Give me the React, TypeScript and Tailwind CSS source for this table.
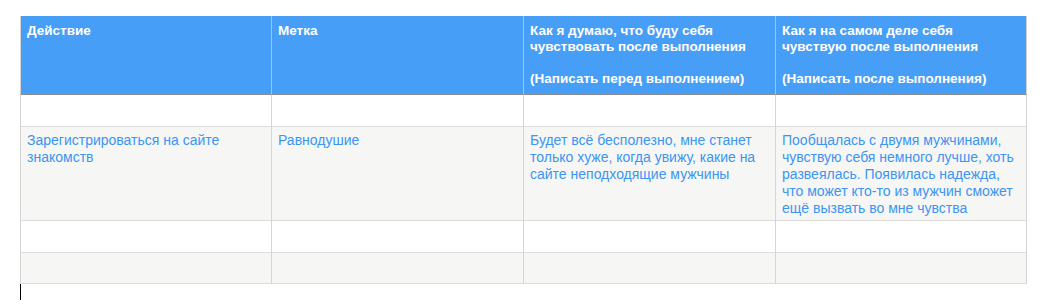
import React from "react";

const headers: string[][] = [
  ["Действие"],
  ["Метка"],
  ["Как я думаю, что буду себя", "чувствовать после выполнения", "", "(Написать перед выполнением)"],
  ["Как я на самом деле себя", "чувствую после выполнения", "", "(Написать после выполнения)"],
];

const rowData: { h: string; bg: string; cells: string[][] }[] = [
  { h: "h-[32px]", bg: "bg-white", cells: [[], [], [], []] },
  {
    h: "h-[94px]",
    bg: "bg-[#f6f6f5]",
    cells: [
      ["Зарегистрироваться на сайте", "знакомств"],
      ["Равнодушие"],
      ["Будет всё бесполезно, мне станет", "только хуже, когда увижу, какие на", "сайте неподходящие мужчины"],
      [
        "Пообщалась с двумя мужчинами,",
        "чувствую себя немного лучше, хоть",
        "развеялась. Появилась надежда,",
        "что может кто-то из мужчин сможет",
        "ещё вызвать во мне чувства",
      ],
    ],
  },
  { h: "h-[32px]", bg: "bg-white", cells: [[], [], [], []] },
  { h: "h-[31px]", bg: "bg-[#f6f6f5]", cells: [[], [], [], []] },
];

export default function App() {
  return (
    <div
      className="w-[1050px] h-[306px] bg-white pl-[20px] pt-[16px]"
      style={{ fontFamily: '"Liberation Sans", Arial, sans-serif' }}
    >
      <div className="grid grid-cols-[252px_252px_252px_251px] w-[1007px]">
        {headers.map((lines, i) => (
          <div
            key={i}
            className={`h-[79px] bg-[#479ef7] border-b border-[#8d8d8d] px-[6px] pt-[7px] text-[13.5px] leading-[16px] font-bold text-white ${
              i < 3 ? "border-r border-r-[#9ac6f5]" : "border-r border-r-[#d4d4d4]"
            } ${i === 0 ? "border-l border-l-[#d4d4d4]" : ""}`}
          >
            {lines.map((l, j) => (
              <div key={j} className="h-[16px] whitespace-nowrap">
                {l}
              </div>
            ))}
          </div>
        ))}
        {rowData.map((r, ri) =>
          r.cells.map((c, ci) => (
            <div
              key={`${ri}-${ci}`}
              className={`${r.h} ${r.bg} border-b border-[#dcdcdc] border-r border-r-[#d4d4d4] ${
                ci === 0 ? "border-l border-l-[#d4d4d4]" : ""
              } px-[6px] pt-[5px] text-[14px] leading-[17px] text-[#3b95f1]`}
            >
              {c.map((l, j) => (
                <div key={j} className="whitespace-nowrap">
                  {l}
                </div>
              ))}
            </div>
          ))
        )}
      </div>
      <div className="w-px h-[17px] bg-black -mt-[1px]" />
    </div>
  );
}
